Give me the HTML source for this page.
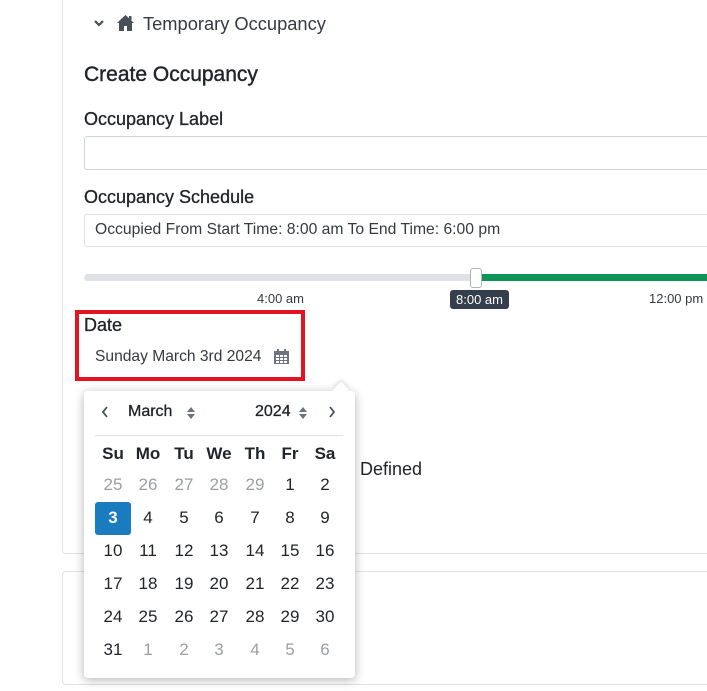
<!DOCTYPE html>
<html><head><style>
body{margin:0;width:707px;height:691px;background:#fff;font-family:"Liberation Sans",sans-serif;color:#212529;position:relative;overflow:hidden}
.a{position:absolute;white-space:nowrap}
.card1{position:absolute;left:62px;top:-10px;width:660px;height:562px;border:1px solid #dee2e6;border-radius:4px}
.card2{position:absolute;left:62px;top:571px;width:660px;height:112px;border:1px solid #dee2e6;border-radius:4px}
.inp{position:absolute;left:84px;width:640px;border:1px solid #ced4da;border-radius:3px;background:#fff}
.pop{position:absolute;left:84px;top:391px;width:271px;height:287px;background:#fff;border-radius:4px;box-shadow:0 2px 10px rgba(0,0,0,.3)}
.c{position:absolute;width:36px;text-align:center;font-size:17px}
.g{color:#9a9ea3}
</style></head><body>
<div class="card1"></div>
<div class="card2"></div>
<svg class="a" style="left:93px;top:19px" width="12" height="10" viewBox="0 0 12 10"><path d="M2 2 L6 6 L10 2" stroke="#495057" stroke-width="2.2" fill="none"/></svg>
<svg class="a" style="left:116px;top:14px" width="19" height="18" viewBox="0 0 19 18"><path d="M9.5 1 L1 9 L3 9 L3 17 L8 17 L8 12 L11 12 L11 17 L16 17 L16 9 L18 9 Z" fill="#495057"/><rect x="13" y="2" width="2.5" height="4" fill="#495057"/></svg>
<div class="a" style="left:143px;top:13px;font-size:18.3px;color:#343a40">Temporary Occupancy</div>
<div class="a" style="left:84px;top:63px;font-size:21px;color:#212529;-webkit-text-stroke:0.4px #212529">Create Occupancy</div>
<div class="a" style="left:84px;top:109px;font-size:18px;-webkit-text-stroke:0.3px #212529">Occupancy Label</div>
<div class="inp" style="top:136px;height:32px"></div>
<div class="a" style="left:84px;top:187px;font-size:18px;-webkit-text-stroke:0.3px #212529">Occupancy Schedule</div>
<div class="inp" style="top:214px;height:31px;border-color:#dee2e6"></div>
<div class="a" style="left:95px;top:221px;font-size:15.7px;color:#343a40">Occupied From Start Time: 8:00 am To End Time: 6:00 pm</div>
<div class="a" style="left:84px;top:274px;width:392px;height:7px;background:#dee2e6;border-radius:4px"></div>
<div class="a" style="left:476px;top:274px;width:240px;height:7px;background:#0f9457"></div>
<div class="a" style="left:470px;top:268px;width:10px;height:18px;background:#fff;border:1px solid #adb5bd;border-radius:3px"></div>
<div class="a" style="left:257px;top:291px;font-size:13px;color:#343a40">4:00 am</div>
<div class="a" style="left:450px;top:290px;width:59px;height:19px;background:#343f4b;border-radius:3px;color:#fff;font-size:13px;text-align:center;line-height:19px">8:00 am</div>
<div class="a" style="left:649px;top:291px;font-size:13px;color:#343a40">12:00 pm</div>
<div class="a" style="left:75px;top:310px;width:222px;height:63px;border:4px solid #e3141f"></div>
<div class="a" style="left:84px;top:315px;font-size:18px;-webkit-text-stroke:0.3px #212529">Date</div>
<div class="a" style="left:95px;top:348px;font-size:15.6px;color:#343a40">Sunday March 3rd 2024</div>
<svg class="a" style="left:273px;top:348px" width="17" height="17" viewBox="0 0 17 17"><rect x="1" y="3" width="15" height="13" fill="#6c757d"/><rect x="4" y="1" width="2" height="3" fill="#6c757d"/><rect x="11" y="1" width="2" height="3" fill="#6c757d"/><g fill="#fff"><rect x="3" y="7" width="3" height="2"/><rect x="7" y="7" width="3" height="2"/><rect x="11" y="7" width="3" height="2"/><rect x="3" y="10" width="3" height="2"/><rect x="7" y="10" width="3" height="2"/><rect x="11" y="10" width="3" height="2"/><rect x="3" y="13" width="3" height="2"/><rect x="7" y="13" width="3" height="2"/><rect x="11" y="13" width="3" height="2"/></g></svg>
<div class="a" style="left:360px;top:459px;font-size:18px">Defined</div>
<div class="pop">
<div style="position:absolute;left:251px;top:-7px;width:12px;height:12px;background:#fff;transform:rotate(45deg);box-shadow:-2px -2px 3px rgba(0,0,0,.1)"></div>
<div style="position:absolute;left:0;top:0;width:271px;height:40px;background:#fff;border-radius:4px"></div>
<svg class="a" style="left:17px;top:15px" width="8" height="12"><path d="M6 1 L2 6 L6 11" stroke="#495057" stroke-width="1.8" fill="none"/></svg>
<div class="a" style="left:44px;top:12px;font-size:16px;-webkit-text-stroke:0.3px #212529">March</div>
<svg class="a" style="left:102px;top:15px" width="10" height="14"><path d="M1 6 L5 1 L9 6Z M1 8 L5 13 L9 8Z" fill="#6c757d"/></svg>
<div class="a" style="left:171px;top:12px;font-size:16px;-webkit-text-stroke:0.3px #212529">2024</div>
<svg class="a" style="left:214px;top:15px" width="10" height="14"><path d="M1 6 L5 1 L9 6Z M1 8 L5 13 L9 8Z" fill="#6c757d"/></svg>
<svg class="a" style="left:244px;top:15px" width="8" height="12"><path d="M2 1 L6 6 L2 11" stroke="#495057" stroke-width="1.8" fill="none"/></svg>
<div class="a" style="left:11px;top:44px;width:248px;height:1px;background:#dee2e6"></div>
<div class="a" style="left:11px;top:111px;width:36px;height:33px;background:#1a7bbf;border-radius:3px"></div>
<div id="cal"></div>
</div>
<script>
var h='',cx=[29,64,100,135,171,206,241];
var hd=['Su','Mo','Tu','We','Th','Fr','Sa'];
for(var i=0;i<7;i++)h+='<div class="c" style="left:'+(cx[i]-18)+'px;top:53px;font-weight:bold">'+hd[i]+'</div>';
var rows=[[25,26,27,28,29,1,2],[3,4,5,6,7,8,9],[10,11,12,13,14,15,16],[17,18,19,20,21,22,23],[24,25,26,27,28,29,30],[31,1,2,3,4,5,6]];
for(var r=0;r<6;r++)for(var i=0;i<7;i++){var g=(r==0&&i<5)||(r==5&&i>0);var s=(r==1&&i==0);
h+='<div class="c'+(g?' g':'')+'" style="left:'+(cx[i]-18)+'px;top:'+(84+r*33)+'px;'+(s?'color:#fff;font-weight:bold':'')+'">'+rows[r][i]+'</div>';}
document.getElementById('cal').innerHTML=h;
</script>
</body></html>
